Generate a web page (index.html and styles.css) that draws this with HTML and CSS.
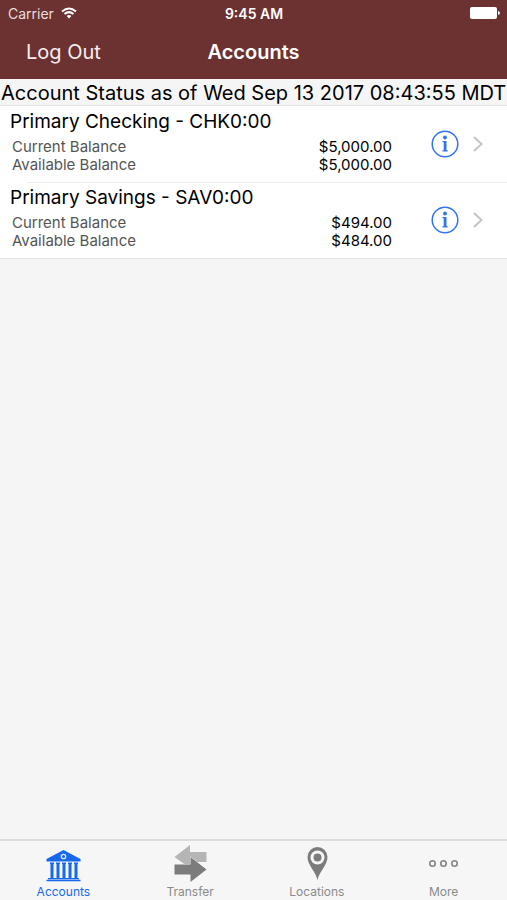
FILE: index.html
```
<!DOCTYPE html>
<html lang="en">
<head>
    <meta charset="UTF-8">
    <meta name="viewport" content="width=device-width, initial-scale=1.0">
    <title>Accounts</title>
    <link rel="stylesheet" href="styles.css">
</head>
<body>
    <header class="header">
        <div class="status-bar">
            <div class="carrier">
                <span>Carrier</span>
                <svg width="16" height="12" viewBox="0 0 16 12" fill="none" stroke="#fff" stroke-width="2">
                    <path d="M1 4.500Q8-1.500 15 4.500M3.500 7Q8 3.200 12.500 7"/>
                    <path d="M8 11.500L5.600 9Q8 7 10.400 9Z" fill="#fff" stroke="none"/>
                </svg>
            </div>
            <span class="time">9:45 AM</span>
            <div class="battery">
                <svg width="30" height="12" viewBox="0 0 30 12" fill="#fff">
                    <rect x="0" y="0" width="27" height="12" rx="2"/>
                    <path d="M28 4Q30 4.500 30 6T28 8Z"/>
                </svg>
            </div>
        </div>
        <nav class="nav-bar">
            <button type="button" class="logout">Log Out</button>
            <h1>Accounts</h1>
        </nav>
    </header>

    <main>
        <p class="as-of">Account Status as of Wed Sep 13 2017 08:43:55 MDT</p>
        <ul class="account-list">
            <li class="account">
                <div class="account-info">
                    <h2>Primary Checking - CHK0:00</h2>
                    <dl>
                        <dt>Current Balance</dt>
                        <dd>$5,000.00</dd>
                        <dt>Available Balance</dt>
                        <dd>$5,000.00</dd>
                    </dl>
                </div>
                <button type="button" class="info" aria-label="Checking details">
                    <svg width="28" height="28" viewBox="0 0 28 28">
                        <circle cx="14" cy="14" r="12.800" fill="none" stroke="#2f74f5" stroke-width="1.500"/>
                        <circle cx="14" cy="7.500" r="1.900" fill="#2f74f5"/>
                        <path d="M11.500 11H15.500V20.200H16.700V21.500H11.500V20.200H12.700V12.300H11.500Z" fill="#2f74f5"/>
                    </svg>
                </button>
                <svg class="chevron" width="10" height="16" viewBox="0 0 10 16" fill="none" stroke="#c4c4c8" stroke-width="2">
                    <path d="M1 1L8.500 8L1 15"/>
                </svg>
            </li>
            <li class="account">
                <div class="account-info">
                    <h2>Primary Savings - SAV0:00</h2>
                    <dl>
                        <dt>Current Balance</dt>
                        <dd>$494.00</dd>
                        <dt>Available Balance</dt>
                        <dd>$484.00</dd>
                    </dl>
                </div>
                <button type="button" class="info" aria-label="Savings details">
                    <svg width="28" height="28" viewBox="0 0 28 28">
                        <circle cx="14" cy="14" r="12.800" fill="none" stroke="#2f74f5" stroke-width="1.500"/>
                        <circle cx="14" cy="7.500" r="1.900" fill="#2f74f5"/>
                        <path d="M11.500 11H15.500V20.200H16.700V21.500H11.500V20.200H12.700V12.300H11.500Z" fill="#2f74f5"/>
                    </svg>
                </button>
                <svg class="chevron" width="10" height="16" viewBox="0 0 10 16" fill="none" stroke="#c4c4c8" stroke-width="2">
                    <path d="M1 1L8.500 8L1 15"/>
                </svg>
            </li>
        </ul>
    </main>

    <nav class="tab-bar">
        <a href="#accounts" class="tab active">
            <svg width="36" height="36" viewBox="0 0 36 36" fill="#1769ec">
                <path d="M18.500 2L35.500 11V13.500H1.500V11Z"/>
                <circle cx="18.500" cy="8.500" r="2.200" fill="none" stroke="#dce9ff" stroke-width="1.300"/>
                <path d="M5 14.500H9V16H8.500V30H5.500V16H5ZM11 14.500H15V16H14.500V30H11.500V16H11ZM17 14.500H21V16H20.500V30H17.500V16H17ZM23 14.500H27V16H26.500V30H23.500V16H23ZM29 14.500H33V16H32.500V30H29.500V16H29Z"/>
                <path d="M3 30H34V31.300H3ZM1.500 31.800H35.500V33.300H1.500Z"/>
            </svg>
            <span>Accounts</span>
        </a>
        <a href="#transfer" class="tab">
            <svg width="36" height="36" viewBox="0 0 36 36">
                <path d="M2.500 9L18 -3V4H34.500V14H18V20Z" fill="#b5b5b5"/>
                <path d="M2.500 16.500H18.500V9L34.500 21.500L18.500 34V26.500H2.500Z" fill="#7c7c7c" stroke="#f6f6f6" stroke-width="1" paint-order="stroke"/>
            </svg>
            <span>Transfer</span>
        </a>
        <a href="#locations" class="tab">
            <svg width="36" height="36" viewBox="0 0 36 36">
                <path d="M18.500 32C16.500 23 8.500 17 8.500 9A10 10 0 0 1 28.500 9C28.500 17 20.500 23 18.500 32Z" fill="#7c7c7c"/>
                <circle cx="18.500" cy="9.500" r="7" fill="#f6f6f6"/>
                <circle cx="18.500" cy="9.500" r="4" fill="#7c7c7c"/>
            </svg>
            <span>Locations</span>
        </a>
        <a href="#more" class="tab">
            <svg width="36" height="36" viewBox="0 0 36 36" fill="none" stroke="#858585" stroke-width="1.600">
                <circle cx="6.500" cy="15.500" r="2.700"/>
                <circle cx="17.500" cy="15.500" r="2.700"/>
                <circle cx="28.500" cy="15.500" r="2.700"/>
            </svg>
            <span>More</span>
        </a>
    </nav>
</body>
</html>
```
FILE: styles.css
```
* {
    box-sizing: border-box;
}

body {
    font-family: Inter, "Liberation Sans", sans-serif;
    background-color: #f5f5f5;
    color: #000;
    margin: 0;
    min-height: 100vh;
    display: flex;
    flex-direction: column;
}

h1,
h2,
p,
ul,
dl,
dd {
    margin: 0;
    padding: 0;
}

button {
    font-family: inherit;
    background: none;
    border: none;
    padding: 0;
    cursor: pointer;
}

svg {
    display: block;
    overflow: visible;
}

.header {
    background-color: #6c3131;
    color: #fff;
    padding-bottom: 2px;
}

.status-bar,
.nav-bar {
    display: grid;
    grid-template-columns: 1fr auto 1fr;
    align-items: center;
}

.status-bar {
    height: 26px;
    padding: 0 7px 0 8px;
    font-size: 14px;
}

.carrier {
    display: flex;
    align-items: center;
    gap: 7px;
    color: #eadede;
}

.time {
    font-weight: 600;
}

.battery {
    justify-self: end;
}

.nav-bar {
    height: 51px;
    padding: 0 26px;
}

.logout {
    justify-self: start;
    color: #f8eeee;
    font-size: 20px;
}

h1 {
    font-size: 20px;
    font-weight: 600;
}

main {
    flex: 1;
}

.as-of {
    padding: 2px 1px 0;
    font-size: 20px;
    line-height: 24px;
    white-space: nowrap;
}

.account-list {
    list-style: none;
    background-color: #fff;
    border-top: 1px solid #e4e4e4;
    border-bottom: 1px solid #e0e0e0;
}

.account {
    display: flex;
    align-items: center;
    padding: 0 24px 0 10px;
}

.account + .account {
    background: linear-gradient(#ececec, #ececec) 27px 0 / 100% 1px no-repeat;
}

.account-info {
    flex: 1;
    padding: 2px 0 8px;
}

h2 {
    font-size: 19px;
    font-weight: 400;
    line-height: 28px;
}

dl {
    display: grid;
    grid-template-columns: 1fr auto;
    padding: 2px 0 0 2px;
    font-size: 15px;
    line-height: 18px;
}

dt {
    color: #555;
}

.info {
    margin: 0 14px 0 39px;
}

.tab-bar {
    display: flex;
    height: 61px;
    border-top: 2px solid #dcdcdc;
    background-color: #f6f6f6;
}

.tab {
    flex: 1;
    display: flex;
    flex-direction: column;
    align-items: center;
    padding-top: 7px;
    color: #8a8a8a;
    font-size: 12px;
    line-height: 15px;
    text-decoration: none;
}

.active {
    color: #1769ec;
}
```
